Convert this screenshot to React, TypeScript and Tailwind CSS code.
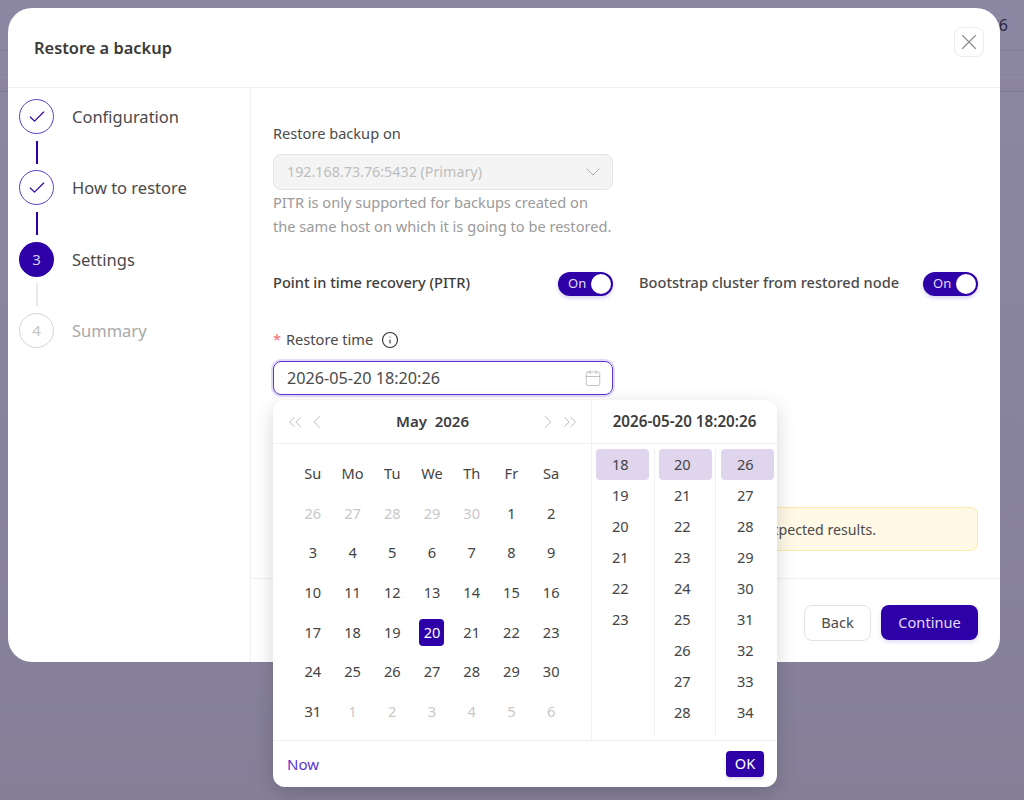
import { Calendar, Check, ChevronDown, ChevronLeft, ChevronRight, ChevronsLeft, ChevronsRight, Info, X } from 'lucide-react';

const weekDays = ['Su', 'Mo', 'Tu', 'We', 'Th', 'Fr', 'Sa'];

const days = [
  ...[26, 27, 28, 29, 30].map((d) => ({ d, muted: true })),
  ...Array.from({ length: 31 }, (_, i) => ({ d: i + 1, muted: false })),
  ...[1, 2, 3, 4, 5, 6].map((d) => ({ d, muted: true })),
];

const timeCols = [
  { box: 'w-[63px] pl-[4px] pr-[5px] border-r border-[#f0f0f0]', cell: 'pl-[16px]', values: [18, 19, 20, 21, 22, 23] },
  { box: 'w-[61px] pl-[4px] pr-[3px] border-r border-[#f0f0f0]', cell: 'pl-[15px]', values: [20, 21, 22, 23, 24, 25, 26, 27, 28] },
  { box: 'w-[61px] pl-[5px] pr-[3px]', cell: 'pl-[16px]', values: [26, 27, 28, 29, 30, 31, 32, 33, 34] },
];

function Step({ n, label, state }: { n: number; label: string; state: 'done' | 'active' | 'todo' }) {
  return (
    <div className="flex items-center gap-[18px] h-[35px]">
      {state === 'done' && (
        <div className="w-[35px] h-[35px] rounded-full border border-[#5b3fc4] flex items-center justify-center">
          <Check size={20} strokeWidth={1.4} className="text-[#2d00a8]" />
        </div>
      )}
      {state === 'active' && (
        <div className="w-[35px] h-[35px] rounded-full bg-[#2d00a8] text-[#d9d0f5] text-[15px] flex items-center justify-center">{n}</div>
      )}
      {state === 'todo' && (
        <div className="w-[35px] h-[35px] rounded-full border border-[#d4d4d4] text-[#c4c4c4] text-[15px] flex items-center justify-center">{n}</div>
      )}
      <span className={`text-[16.5px] pt-[2px] ${state === 'todo' ? 'text-[#a8a8a8]' : 'text-[#4a4a4a]'}`}>{label}</span>
    </div>
  );
}

function Connector({ on }: { on: boolean }) {
  return (
    <div className="h-[36.3px] w-[35px] flex items-center justify-center">
      <div className={`w-[2px] h-[23px] ${on ? 'bg-[#2d00a8]' : 'bg-[#e8e8e8]'}`} />
    </div>
  );
}

function Toggle() {
  return (
    <div className="w-[55px] h-[24px] rounded-full bg-[#2d00a8] flex items-center justify-between pl-[10px] pr-[2px] shadow-[0_2px_4px_rgba(45,0,168,0.2)]">
      <span className="text-[13px] text-[#e4dcfa]">On</span>
      <span className="w-[20px] h-[20px] rounded-full bg-white" />
    </div>
  );
}

function DatePopover() {
  return (
    <div className="absolute left-[265px] top-[392px] w-[504px] h-[387px] bg-white rounded-[12px] shadow-[0_6px_20px_rgba(0,0,0,0.16)] flex flex-col text-[#444444]">
      <div className="flex flex-1 min-h-0">
        <div className="w-[319px] border-r border-[#f0f0f0] flex flex-col">
          <div className="h-[44px] border-b border-[#f0f0f0] flex items-center justify-between pl-[11px] pr-[10px] text-[#b5b5b5]">
            <div className="flex items-center">
              <ChevronsLeft size={22} strokeWidth={1} />
              <ChevronLeft size={22} strokeWidth={1} />
            </div>
            <span className="text-[15px] font-semibold text-[#3d3d3d] whitespace-pre">May  2026</span>
            <div className="flex items-center">
              <ChevronRight size={22} strokeWidth={1} />
              <ChevronsRight size={22} strokeWidth={1} />
            </div>
          </div>
          <div className="grid grid-cols-7 w-[278px] ml-[20px] mt-[10px] auto-rows-[39.7px] text-[14.6px]">
            {weekDays.map((w) => (
              <div key={w} className="flex items-center justify-center">{w}</div>
            ))}
            {days.map((c, i) => (
              <div key={i} className={`flex items-center justify-center ${c.muted ? 'text-[#c8c8c8]' : ''}`}>
                {!c.muted && c.d === 20 ? (
                  <span className="w-[25px] h-[27px] rounded-[4px] bg-[#2d00a8] text-white flex items-center justify-center">20</span>
                ) : (
                  c.d
                )}
              </div>
            ))}
          </div>
        </div>
        <div className="flex-1 flex flex-col">
          <div className="h-[44px] border-b border-[#f0f0f0] flex items-center justify-center text-[15.2px] font-semibold text-[#3d3d3d]">
            2026-05-20 18:20:26
          </div>
          <div className="flex flex-1 pt-[5px] pb-[4px]">
            {timeCols.map((col, ci) => (
              <div key={ci} className={`${col.box} text-[14.6px]`}>
                {col.values.map((v, i) => (
                  <div key={v} className={`h-[31px] rounded-[4px] flex items-center ${col.cell} ${i === 0 ? 'bg-[#dfd6ee]' : ''}`}>{v}</div>
                ))}
              </div>
            ))}
          </div>
        </div>
      </div>
      <div className="h-[47px] border-t border-[#f0f0f0] flex items-center justify-between pl-[14px] pr-[13px]">
        <span className="text-[15px] text-[#5b34cf]">Now</span>
        <span className="w-[38px] h-[26px] rounded-[4px] bg-[#2d00a8] text-white text-[14.6px] flex items-center justify-center shadow-[0_2px_3px_rgba(45,0,168,0.15)]">OK</span>
      </div>
    </div>
  );
}

export default function App() {
  return (
    <div className="relative w-[1024px] h-[800px] overflow-hidden bg-gradient-to-b from-[#8c87a3] to-[#857f98] font-['Noto_Sans',sans-serif]">
      <div className="h-[51px] border-b border-[#857f9b] flex items-center justify-end pr-[16px] text-[16px] text-[#2b2440]">2026</div>
      <div className="h-[27px] border-b border-[#8f8aa5]" />
      <div className="h-[14px] border-b border-[#807a94] bg-[#8a849f]" />

      <div className="absolute left-[8px] top-[8px] w-[992px] h-[654px] bg-white rounded-[24px] flex flex-col">
        <div className="h-[80px] shrink-0 border-b border-[#f0f0f0] flex items-center justify-between pl-[26px] pr-[16px]">
          <span className="text-[16.4px] font-semibold text-[#3a3a3a] pt-[2px]">Restore a backup</span>
          <div className="w-[30px] h-[30px] rounded-[8px] border border-[#ececec] flex items-center justify-center mb-[12px]">
            <X size={26} strokeWidth={1} className="text-[#8a8a8a] shrink-0" />
          </div>
        </div>

        <div className="flex flex-1 min-h-0">
          <div className="w-[243px] shrink-0 border-r border-[#f0f0f0] pl-[11px] pt-[11px]">
            <Step n={1} label="Configuration" state="done" />
            <Connector on />
            <Step n={2} label="How to restore" state="done" />
            <Connector on />
            <Step n={3} label="Settings" state="active" />
            <Connector on={false} />
            <Step n={4} label="Summary" state="todo" />
          </div>

          <div className="flex-1 flex flex-col min-w-0">
            <div className="h-[490px] px-[22px] pt-[35px] text-[14.6px] text-[#4a4a4a]">
              <div className="leading-[20px]">Restore backup on</div>
              <div className="mt-[11px] w-[340px] h-[36px] rounded-[8px] border border-[#e4e4e4] bg-[#f4f4f4] flex items-center justify-between pl-[13px] pr-[7px] text-[#bdbdbd] text-[14.3px]">
                <span>192.168.73.76:5432 (Primary)</span>
                <ChevronDown size={24} strokeWidth={1} className="text-[#a8a8a8]" />
              </div>
              <div className="w-[340px] text-[#9a9a9a] leading-[24px] whitespace-nowrap">
                PITR is only supported for backups created on
                <br />
                the same host on which it is going to be restored.
              </div>
              <div className="flex items-center mt-[34px] h-[24px]">
                <div className="w-[340px] flex items-center justify-between">
                  <span className="font-medium text-[#3d3d3d] pb-[3px]">Point in time recovery (PITR)</span>
                  <Toggle />
                </div>
                <div className="w-[339px] ml-[26px] flex items-center justify-between">
                  <span className="font-medium text-[#4a4a4a] pb-[3px]">Bootstrap cluster from restored node</span>
                  <Toggle />
                </div>
              </div>
              <div className="flex items-center mt-[34px] h-[20px]">
                <span className="text-[#f87171] mr-[5px]">*</span>
                <span>Restore time</span>
                <Info size={18} strokeWidth={1.5} className="ml-[8px] text-[#333333]" />
              </div>
              <div className="mt-[11px] w-[340px] h-[34px] rounded-[8px] border border-[#5b34cf] shadow-[0_0_0_2px_rgba(91,52,207,0.18)] flex items-center justify-between pl-[13px] pr-[10px] text-[16.2px]">
                <span>2026-05-20 18:20:26</span>
                <Calendar size={18} strokeWidth={1} className="text-[#b0b0b0]" />
              </div>
              <div className="mt-[112px] w-[705px] h-[44px] rounded-[8px] border border-[#fde9a8] bg-[#fff9e6] flex items-center justify-end pr-[101px] pt-[2px] text-[14.2px]">
                <div className="w-[100px] overflow-hidden flex justify-end whitespace-nowrap">
                  <span className="shrink-0">Restoring to this point may give unexpected results.</span>
                </div>
              </div>
            </div>
            <div className="flex-1 border-t border-[#f0f0f0] flex justify-end gap-[10px] pt-[26px] pr-[22px]">
              <div className="w-[67px] h-[36px] rounded-[8px] border border-[#e2e2e2] flex items-center justify-center text-[14.6px] text-[#4a4a4a]">Back</div>
              <div className="w-[97px] h-[35px] rounded-[8px] bg-[#2d00a8] flex items-center justify-center text-[14.6px] text-[#e4dcfa] shadow-[0_2px_4px_rgba(45,0,168,0.15)]">Continue</div>
            </div>
          </div>
        </div>

        <DatePopover />
      </div>
    </div>
  );
}
